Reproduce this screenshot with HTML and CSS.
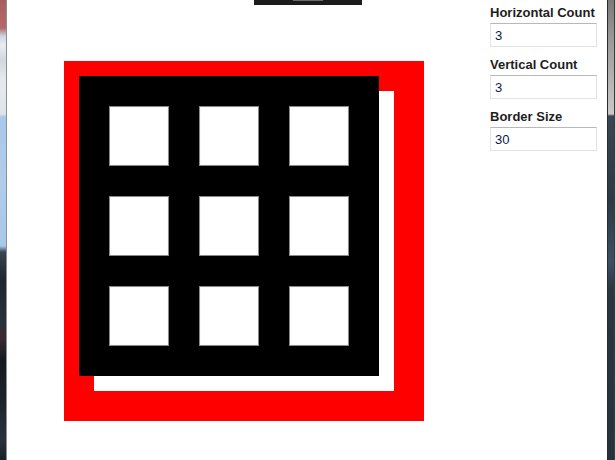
FILE: index.html
```html
<!DOCTYPE html>
<html>
<head>
<meta charset="utf-8">
<link rel="stylesheet" href="styles.css">
</head>
<body>
<div class="edge-left"></div>
<main class="stage">
  <div class="topbar"><span class="topbar-thumb"></span></div>
  <div class="canvas">
    <div class="canvas-inner"></div>
    <div class="grid">
      <div class="cell"></div><div class="cell"></div><div class="cell"></div>
      <div class="cell"></div><div class="cell"></div><div class="cell"></div>
      <div class="cell"></div><div class="cell"></div><div class="cell"></div>
    </div>
  </div>
</main>
<aside class="panel">
  <label class="field">
    <span class="field-label">Horizontal Count</span>
    <input class="field-input" type="text" value="3">
  </label>
  <label class="field">
    <span class="field-label">Vertical Count</span>
    <input class="field-input" type="text" value="3">
  </label>
  <label class="field">
    <span class="field-label">Border Size</span>
    <input class="field-input" type="text" value="30">
  </label>
</aside>
<div class="edge-right"></div>
</body>
</html>
```
FILE: styles.css
```css
html, body {
  margin: 0;
  padding: 0;
}
body {
  width: 615px;
  height: 460px;
  overflow: hidden;
  display: flex;
  background: #ffffff;
  font-family: "Liberation Sans", Arial, sans-serif;
}
.edge-left {
  width: 6px;
  flex: none;
  border-right: 1px solid #8a8f96;
  background: linear-gradient(to bottom,
    #a85c5e 0px, #b46a6c 28px, #c9d6e2 36px, #e8edf2 45px, #d2d8de 60px,
    #e6eaee 80px, #dfe4e8 114px, #a9c9ea 117px, #b0cdea 180px, #a8c8ea 246px,
    #3a4550 252px, #1e262e 280px, #27303a 320px, #3a2a32 338px, #151a20 360px,
    #1c232a 400px, #2a333c 440px, #1a2028 460px);
}
.stage {
  flex: 1;
  position: relative;
  padding: 61px 0 0 57px;
}
.topbar {
  position: absolute;
  left: 247px;
  top: 0;
  width: 108px;
  height: 5px;
  background: #1c1c1c;
}
.topbar-thumb {
  position: absolute;
  left: 39px;
  top: 0;
  width: 30px;
  height: 1px;
  background: #6a6a6a;
}
.canvas {
  position: relative;
  width: 300px;
  height: 300px;
  padding: 30px;
  background: #ff0000;
}
.canvas-inner {
  width: 300px;
  height: 300px;
  background: #ffffff;
}
.grid {
  position: absolute;
  left: 15px;
  top: 15px;
  width: 240px;
  height: 240px;
  padding: 30px;
  background: #000000;
  display: grid;
  grid-template-columns: repeat(3, 60px);
  grid-template-rows: repeat(3, 60px);
  gap: 30px;
}
.cell {
  background: #ffffff;
  box-shadow: inset 0 0 0 1px #8a8a8a, inset 0 0 0 2px #fafafa;
}
.panel {
  width: 107px;
  flex: none;
  margin-right: 10px;
  padding-top: 5px;
  display: flex;
  flex-direction: column;
  gap: 10px;
}
.field {
  display: flex;
  flex-direction: column;
  gap: 2px;
}
.field-label {
  font-weight: bold;
  font-size: 13px;
  line-height: 16px;
  color: #1e1e1e;
}
.field-input {
  box-sizing: border-box;
  width: 107px;
  height: 24px;
  margin: 0;
  padding: 0 4px;
  border: 1px solid #e2e3e6;
  border-top-color: #b5b8bd;
  font-family: "Liberation Sans", Arial, sans-serif;
  font-size: 13px;
  color: #0a1c4a;
  background: #ffffff;
  outline: none;
}
.edge-right {
  width: 6px;
  flex: none;
  border-left: 1px solid #2a2a2a;
  border-right: 1px solid #3a3a3a;
  background: linear-gradient(to bottom,
    #7a7a7a 0px, #9a9a9a 40px, #c0c0c0 100px, #c8c8c8 114px,
    #3a4652 116px, #2c3844 200px, #3a5066 262px, #2a3642 290px, #26313c 460px);
}
```
